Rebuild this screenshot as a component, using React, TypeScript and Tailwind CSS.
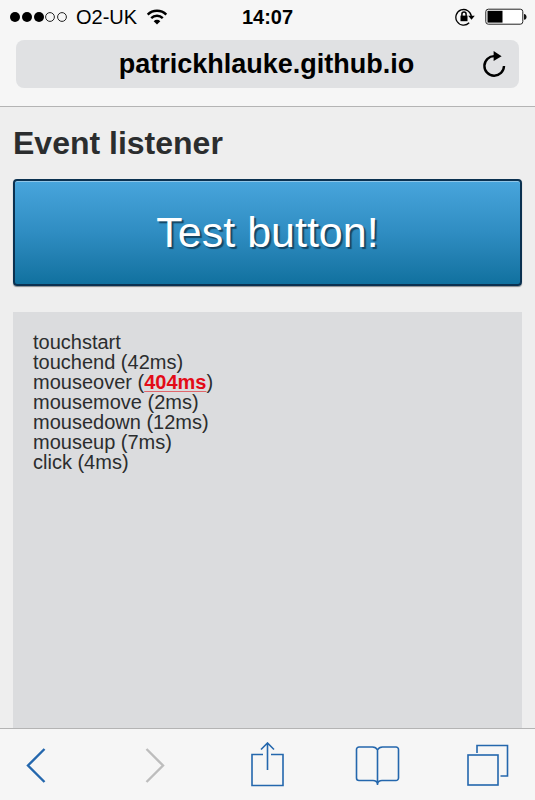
import type { ReactNode } from "react";

const events = [
  { name: "touchstart" },
  { name: "touchend", time: "42ms" },
  { name: "mouseover", time: "404ms", slow: true },
  { name: "mousemove", time: "2ms" },
  { name: "mousedown", time: "12ms" },
  { name: "mouseup", time: "7ms" },
  { name: "click", time: "4ms" },
];

function StatusBar() {
  return (
    <div className="grid grid-cols-3 items-center px-2 h-8 text-black">
      <div className="flex items-center gap-2 whitespace-nowrap">
        <svg width="60" height="12" viewBox="0 0 60 12" aria-label="Signal strength">
          {[7, 19, 31].map((x) => (
            <circle key={x} cx={x} cy="6" r="5" />
          ))}
          {[42, 54].map((x) => (
            <circle key={x} cx={x} cy="6" r="4.4" fill="none" stroke="#222" />
          ))}
        </svg>
        <span className="text-xl leading-5">O2-UK</span>
        <svg className="shrink-0" width="24" height="18" viewBox="0 0 24 18" fill="none" stroke="#000" strokeWidth="2.4" aria-label="Wi-Fi">
          <path d="M2.7 6.6a13.2 13.2 0 0 1 18.6 0" />
          <path d="M6.2 10.2a8.2 8.2 0 0 1 11.6 0" />
          <path d="M8.7 13.2a4.7 4.7 0 0 1 6.6 0L12 16.6Z" fill="#000" stroke="none" />
        </svg>
      </div>
      <time className="text-center text-xl leading-5 font-bold">14:07</time>
      <div className="flex items-center justify-end gap-2">
        <svg width="22" height="20" viewBox="0 0 22 20" fill="none" stroke="#000" strokeWidth="1.3" aria-label="Rotation lock">
          <path d="M14.2 15.8A7.8 7.8 0 1 1 16.4 9.4" />
          <path d="M13.2 8.7h6.6l-3.3 4Z" fill="#000" stroke="none" />
          <rect x="5.5" y="8.6" width="7" height="5.6" fill="#000" stroke="none" />
          <path d="M6.9 9V7.2a2.1 2.1 0 0 1 4.2 0V9" strokeWidth="1.5" />
        </svg>
        <svg width="42" height="18" viewBox="0 0 42 18" aria-label="Battery">
          <rect x="0.8" y="1.2" width="37" height="15" rx="2.5" fill="#fff" stroke="#222" />
          <rect x="2.5" y="2.8" width="15" height="11.8" fill="#000" />
          <path d="M39 6c3.4.4 3.4 5.4 0 5.8Z" fill="#111" />
        </svg>
      </div>
    </div>
  );
}

function ToolButton({ label, disabled, children }: { label: string; disabled?: boolean; children: ReactNode }) {
  return (
    <button aria-label={label} disabled={disabled} className="text-[#2467ad] disabled:text-[#bdbdbd]">
      <svg width="46" height="46" viewBox="0 0 46 46" fill="none" stroke="currentColor" strokeWidth="1.6">
        {children}
      </svg>
    </button>
  );
}

export default function App() {
  return (
    <div className="flex min-h-screen flex-col bg-[#eeeeee] font-['Liberation_Sans',Arial,sans-serif] text-[#2b2d2e]">
      <header className="border-b border-[#b4b4b4] bg-[#f6f6f6] pt-px pb-[18px]">
        <StatusBar />
        <div className="mx-4 mt-[7px] flex h-12 items-center rounded-lg bg-[#e0e1e3] px-3 text-black">
          <span className="flex-1 pl-6 text-center text-[27px] leading-8 font-bold">patrickhlauke.github.io</span>
          <button aria-label="Reload">
            <svg width="26" height="28" viewBox="0 0 26 28" fill="none" stroke="#000" strokeWidth="2.4">
              <path d="M15 6.1H13.5A9.8 9.8 0 1 0 23 16" />
              <path d="M12.6 1 20.6 6.2 12.6 11Z" fill="#000" stroke="none" />
            </svg>
          </button>
        </div>
      </header>

      <main className="flex flex-1 flex-col px-[13px] pt-4">
        <h1 className="text-[32px] leading-10 font-bold">Event listener</h1>
        <button className="mt-4 h-[107px] rounded-sm border-2 border-[#0b3150] bg-linear-to-b from-[#48a5dc] via-[#2f8dc2] to-[#10719f] text-[43px] text-white shadow-[0_1px_1px_#85898c,inset_0_1px_0_#8fc6e8] [text-shadow:2px_2px_1px_#144563]">
          Test button!
        </button>
        <ul className="mt-[26px] flex-1 bg-[#dbdcde] p-5 text-xl leading-5">
          {events.map((e) => (
            <li key={e.name}>
              {e.name}
              {e.time && (
                <>
                  {" ("}
                  {e.slow ? (
                    <strong className="text-[#e30b17] underline decoration-[#e2666b] decoration-1 underline-offset-2">
                      {e.time}
                    </strong>
                  ) : (
                    e.time
                  )}
                  )
                </>
              )}
            </li>
          ))}
        </ul>
      </main>

      <nav className="flex h-[72px] items-center justify-between border-t border-[#b4b4b4] bg-[#f6f6f6] pr-6 pl-5">
        <ToolButton label="Back">
          <path d="M24.5 7 8 23.5 24.5 40" strokeWidth="2.4" />
        </ToolButton>
        <ToolButton label="Forward" disabled>
          <path d="M15.5 7 32 23.5 15.5 40" strokeWidth="2.4" />
        </ToolButton>
        <ToolButton label="Share">
          <path d="M20 12.5H9v31h31v-31H28" />
          <path d="M24.5 28V1M18 7.5 24.5 1l6.5 6.500" />
        </ToolButton>
        <ToolButton label="Bookmarks">
          <path d="M23.5 8C22.5 6 21 5 18.5 5H5a2.5 2.5 0 0 0-2.5 2.5v28.500a2.5 2.5 0 0 0 2.5 2.5h14c2.5 0 4 1 4.5 3.5.5-2.5 2-3.5 4.5-3.5h14a2.5 2.5 0 0 0 2.5-2.5v-28.500a2.5 2.5 0 0 0-2.5-2.5H28.500c-2.5 0-4 1-5 3V43" />
        </ToolButton>
        <ToolButton label="Tabs">
          <rect x="3" y="13" width="30" height="30" />
          <path d="M12 11V3.5h30.5V34h-7" />
        </ToolButton>
      </nav>
    </div>
  );
}
